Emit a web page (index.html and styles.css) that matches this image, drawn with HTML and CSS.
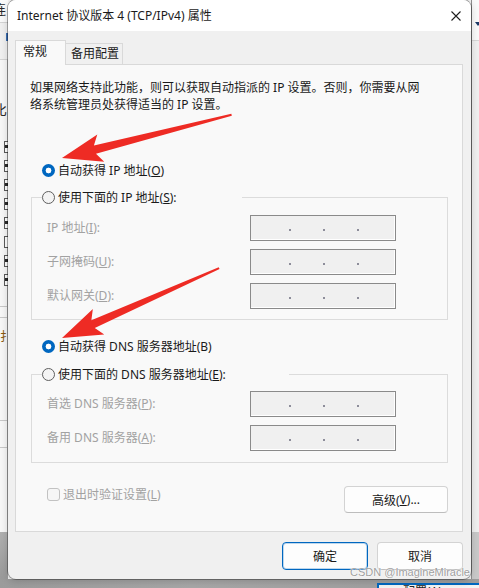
FILE: index.html
```html
<!DOCTYPE html>
<html lang="zh-CN">
<head>
<meta charset="utf-8">
<title>Internet 协议版本 4 (TCP/IPv4) 属性</title>
<link rel="stylesheet" href="styles.css">
</head>
<body>
<div class="desk">
  <div class="strip-left">
    <div class="ls-head"><span class="ls-char">连</span></div>
    <div class="ls-tool"><span class="ls-blue"></span></div>
    <div class="ls-list">
      <span class="ls-char ls-char2">比</span>
      <div class="ls-checks">
        <span class="cb on"></span><span class="cb on"></span><span class="cb on"></span><span class="cb on"></span>
        <span class="cb on"></span><span class="cb"></span><span class="cb on"></span><span class="cb on"></span>
      </div>
      <div class="ls-line l1"></div>
      <div class="ls-line l2"></div>
      <span class="ls-mark">扌</span>
      <div class="ls-line l3"></div>
      <div class="ls-line l4"></div>
    </div>
    <div class="ls-foot"></div>
  </div>

  <div class="dialog">
    <div class="titlebar">
      <span class="title">Internet 协议版本 4 (TCP/IPv4) 属性</span>
      <svg class="close" width="10" height="10" viewBox="0 0 10 10"><path d="M0.5 0.5L9.5 9.5M9.5 0.5L0.5 9.5" stroke="#1f1f1f" stroke-width="1.1" fill="none"/></svg>
    </div>
    <div class="dbody">
      <div class="tabs">
        <div class="tab active">常规</div>
        <div class="tab">备用配置</div>
      </div>
      <div class="panel">
        <p class="desc">如果网络支持此功能，则可以获取自动指派的 IP 设置。否则，你需要从网<br>络系统管理员处获得适当的 IP 设置。</p>

        <div class="radio r-top"><span class="dot on"></span>自动获得 IP 地址(<u>O</u>)</div>
        <div class="group g-ip">
          <div class="radio legend legend-ip"><span class="dot"></span>使用下面的 IP 地址(<u>S</u>):</div>
          <div class="fields f-ip">
            <span class="flabel">IP 地址(<u>I</u>):</span>
            <span class="ipbox"><i></i><i></i><i></i></span>
            <span class="flabel">子网掩码(<u>U</u>):</span>
            <span class="ipbox"><i></i><i></i><i></i></span>
            <span class="flabel">默认网关(<u>D</u>):</span>
            <span class="ipbox"><i></i><i></i><i></i></span>
          </div>
        </div>

        <div class="radio r-dns"><span class="dot on"></span>自动获得 DNS 服务器地址(B)</div>
        <div class="group g-dns">
          <div class="radio legend legend-dns"><span class="dot"></span>使用下面的 DNS 服务器地址(<u>E</u>):</div>
          <div class="fields f-dns">
            <span class="flabel">首选 DNS 服务器(<u>P</u>):</span>
            <span class="ipbox"><i></i><i></i><i></i></span>
            <span class="flabel">备用 DNS 服务器(<u>A</u>):</span>
            <span class="ipbox"><i></i><i></i><i></i></span>
          </div>
        </div>

        <div class="actions">
          <div class="check"><span class="box"></span>退出时验证设置(<u>L</u>)</div>
          <div class="btn adv">高级(<u>V</u>)...</div>
        </div>
      </div>
      <div class="footer">
        <div class="btn primary">确定</div>
        <div class="btn">取消</div>
      </div>
    </div>
  </div>

  <div class="strip-right">
    <div class="sr-top"><span class="sr-tri"></span></div>
    <div class="sr-mid"></div>
    <div class="sr-low"></div>
  </div>

  <div class="strip-bottom">
    <div class="sb-win"><span>配置(A)</span></div>
  </div>
</div>

<svg class="arrows" width="479" height="588" viewBox="0 0 479 588">
  <g transform="translate(62,158) rotate(-14.3)">
    <polygon points="0,0 40,-14 34,-4.2 175,-1 175,1 34,4.2 40,14" fill="#ee2b24"/>
  </g>
  <g transform="translate(62,338) rotate(-24)">
    <polygon points="0,0 40,-14 34,-4.2 172,-1 172,1 34,4.2 40,14" fill="#ee2b24"/>
  </g>
</svg>

<div class="watermark">CSDN @ImagineMiracle</div>
</body>
</html>
```

FILE: styles.css
```css
* { box-sizing: border-box; margin: 0; padding: 0; }
html, body { width: 479px; height: 588px; overflow: hidden; }
body {
  position: relative;
  font-family: "Noto Sans", "Noto Sans CJK SC", sans-serif;
  font-size: 12px;
  color: #1b1b1b;
  background: #f2f2f2;
}
u { text-decoration: underline; text-underline-offset: 1px; }

.desk {
  display: grid;
  grid-template-columns: 8px 463px 8px;
  grid-template-rows: 579px 9px;
  width: 479px;
  height: 588px;
}

/* ---------- backdrop: left strip ---------- */
.strip-left {
  grid-column: 1; grid-row: 1;
  display: flex; flex-direction: column;
  overflow: hidden;
}
.ls-head { height: 22px; background: #fafafa; }
.ls-char { display: block; margin-left: -7px; font-size: 13px; line-height: 18px; color: #2a2a2a; }
.ls-tool { height: 38px; background: #f0f0f0; border-top: 1px solid #d4d4d4; border-bottom: 1px solid #d4d4d4; }
.ls-blue { display: block; width: 2px; height: 8px; margin: 10px 0 0 6px; background: #3a6fb5; }
.ls-list { height: 472px; background: #f7f7f7; border-right: 1px solid #c9c9c9; }
.ls-char2 { margin-top: 42px; line-height: 16px; font-size: 14px; }
.ls-checks { display: flex; flex-direction: column; gap: 7px; margin-top: 23px; }
.cb { display: block; width: 12px; height: 12px; margin-left: 4px; border: 1px solid #5a5a5a; background: #fff; }
.cb.on { background: linear-gradient(#fff 0 3px, #2a2a2a 3px 6px, #fff 6px); }
.ls-line { height: 1px; background: #c8c8c8; }
.l1 { margin-top: 20px; }
.l2 { margin-top: 10px; }
.ls-mark { display: block; margin: 12px 0 0 0; font-size: 12px; line-height: 14px; color: #8a5a10; }
.l3 { margin-top: 76px; }
.l4 { margin-top: 26px; }
.ls-foot { flex: 1; background: linear-gradient(#b0b0b0, #9a9a9a); }

/* ---------- backdrop: right strip ---------- */
.strip-right {
  grid-column: 3; grid-row: 1;
  display: flex; flex-direction: column;
  border-left: 1px solid #8f8f8f;
}
.sr-top { height: 41px; background: #fafafa; border-bottom: 1px solid #d8d8d8; }
.sr-tri {
  display: block; width: 0; height: 0; margin: 22px 0 0 3px;
  border-left: 3px solid transparent; border-right: 3px solid transparent; border-top: 4px solid #1d3b66;
}
.sr-mid { height: 491px; background: #f0f0f0; }
.sr-low { flex: 1; background: #c9c9c9; }

/* ---------- backdrop: bottom strip ---------- */
.strip-bottom {
  grid-column: 1 / -1; grid-row: 2;
  background: linear-gradient(90deg, #9b9b9b, #a7a7a7 40%, #9d9d9d);
  display: flex; justify-content: flex-end; align-items: flex-end;
}
.sb-win {
  width: 102px; height: 5px; overflow: hidden;
  background: #f3f3f3; border-top: 2px solid #0067c0; border-left: 2px solid #0067c0;
  padding-left: 24px; font-size: 12px; line-height: 14px; color: #222;
}

/* ---------- dialog ---------- */
.dialog {
  grid-column: 2; grid-row: 1;
  position: relative; z-index: 1;
  display: flex; flex-direction: column;
  background: #f0f0f0;
  border-radius: 8px;
  overflow: hidden;
  box-shadow: 0 0 0 1px rgba(0,0,0,.32), 0 2px 8px rgba(0,0,0,.18);
}
.titlebar {
  height: 31px; flex: none;
  background: #fff;
  display: flex; align-items: center; justify-content: space-between;
  padding: 0 10px 0 9px;
}
.title { font-size: 12px; line-height: 16px; color: #1a1a1a; }
.close { display: block; }

.dbody { flex: 1; display: flex; flex-direction: column; padding: 9px 8px 0 7px; }

.tabs { display: flex; align-items: flex-end; height: 24px; }
.tab {
  height: 21px; line-height: 19px;
  padding: 0 3px 0 5px;
  background: #f0f0f0;
  border: 1px solid #d9d9d9; border-left: none; border-bottom: none;
  color: #1a1a1a;
}
.tab.active {
  position: relative; z-index: 1;
  height: 25px; line-height: 22px; margin-bottom: -1px;
  padding: 0 18px 0 7px;
  background: #f9f9f9;
  border-left: 1px solid #d9d9d9;
}

.panel {
  background: #f9f9f9;
  border: 1px solid #d9d9d9;
  padding: 14px 14px 18px 14px;
}
.desc { line-height: 17px; color: #1a1a1a; white-space: nowrap; }

.radio { display: flex; align-items: center; height: 20px; color: #1a1a1a; white-space: nowrap; }
.r-top { margin: 47px 0 0 12px; }
.r-dns { margin: 16px 0 0 12px; }
.dot {
  flex: none; width: 13px; height: 13px; margin-right: 3px;
  border-radius: 50%;
  border: 1px solid #5f5f5f; background: #f4f4f4;
}
.dot.on {
  border: none;
  background: radial-gradient(circle, #ffffff 0 2.6px, #0067c0 3.2px);
}

.group {
  width: 417px; margin: 17px 0 0 1px;
  border: 1px solid #dcdcdc;
  padding: 0 0 10px 15px;
}
.g-dns { margin-top: 18px; padding-bottom: 11px; }
.legend { margin: -11px 0 0 -5px; background: #f9f9f9; }
.legend-ip { width: 200px; }
.legend-dns { width: 247px; }

.fields {
  display: grid;
  grid-template-columns: 203px 146px;
  row-gap: 8px;
  margin-top: 8px;
}
.f-dns { margin-top: 7px; }
.flabel { line-height: 26px; color: #a2a2a2; white-space: nowrap; }
.ipbox {
  height: 26px;
  display: flex; align-items: center;
  padding: 4px 0 0 38px;
  gap: 32px;
  background: #f0f0f0;
  border: 1px solid #8a8a8a;
  box-shadow: inset -1px -1px 0 #ffffff;
}
.ipbox i { display: block; width: 2px; height: 2px; background: #8d8d9a; }

.actions {
  display: flex; justify-content: space-between; align-items: flex-start;
  width: 401px; margin: 23px 0 0 17px;
}
.check { display: flex; align-items: center; height: 20px; margin-top: -2px; color: #a2a2a2; white-space: nowrap; }
.box {
  width: 13px; height: 13px; margin-right: 3px;
  border: 1px solid #c2c2c2; border-radius: 3px; background: #f6f6f6;
}

.btn {
  display: flex; align-items: center; justify-content: center;
  width: 86px; height: 28px;
  background: #fdfdfd;
  border: 1px solid #d3d3d3; border-bottom-color: #bdbdbd;
  border-radius: 4px;
  color: #1a1a1a; white-space: nowrap;
}
.adv { width: 104px; height: 27px; }
.btn.primary { border: 1px solid #0067c0; box-shadow: inset 0 0 0 1px rgba(0,103,192,.25); }

.footer { display: flex; justify-content: flex-end; gap: 9px; margin-top: 10px; }

/* ---------- overlays ---------- */
.arrows { position: absolute; left: 0; top: 0; z-index: 2; pointer-events: none; }
.watermark {
  position: absolute; left: 350px; top: 565px; z-index: 3;
  font-family: "Liberation Sans", Arial, sans-serif; font-size: 11px; line-height: 14px;
  color: rgba(140,140,140,.85);
  text-shadow: 0 0 2px #fff, 0 0 1px #fff;
  white-space: nowrap;
}
```
